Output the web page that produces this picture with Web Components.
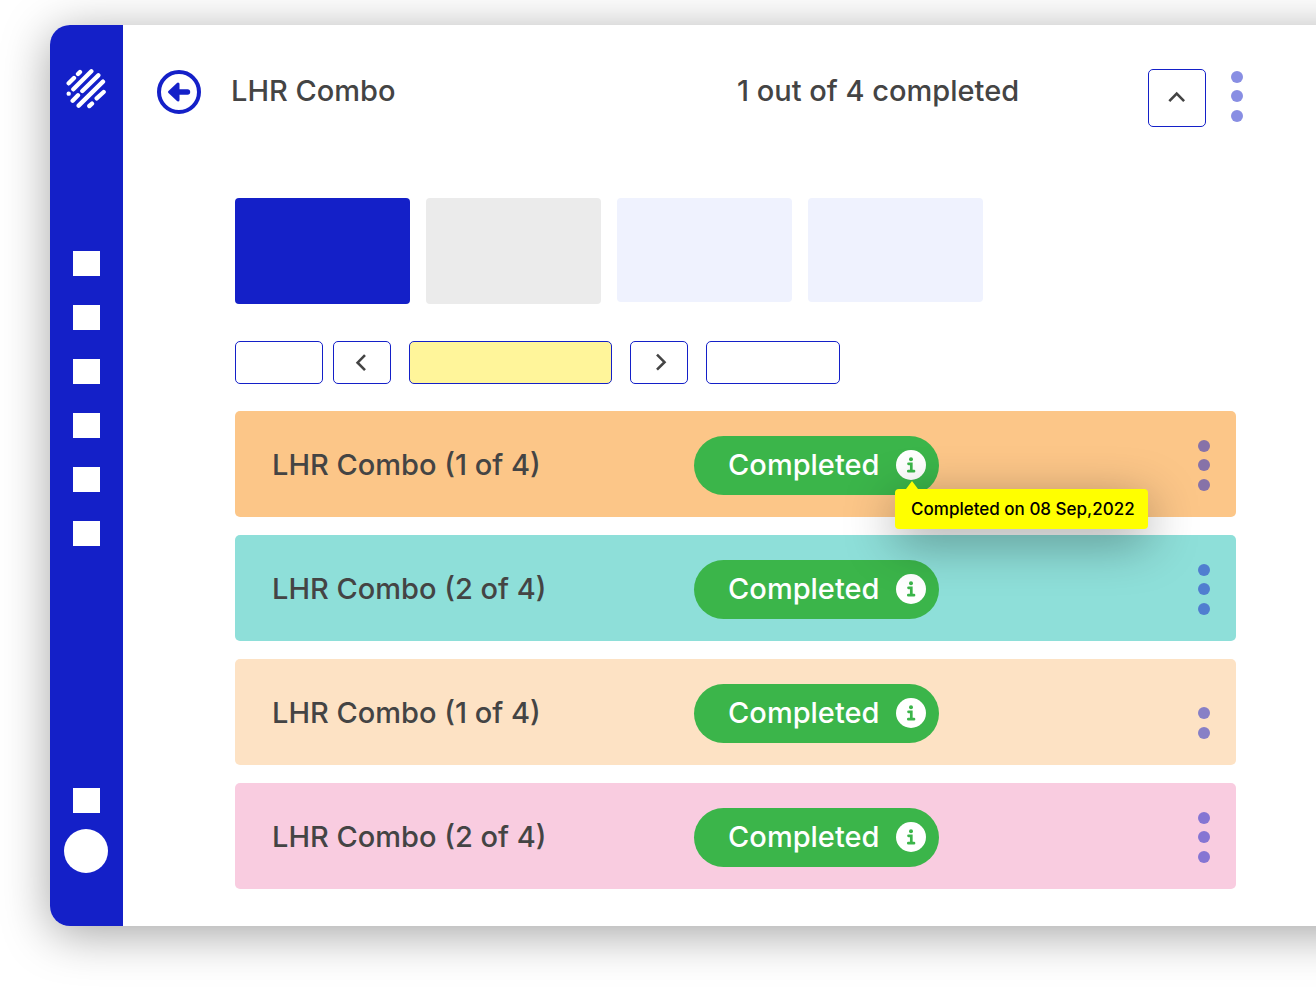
<!DOCTYPE html>
<html lang="en">
<head>
<meta charset="utf-8">
<meta name="viewport" content="width=device-width, initial-scale=1">
<title>LHR Combo</title>
<style>
  body {
    --brand: #1420c8;
    --ink: #444;
    margin: 0;
    background: #fff;
    color: var(--ink);
    font: 500 29px/36px Inter, "Liberation Sans", sans-serif;
  }
</style>
</head>
<body>
<app-shell>
  <side-rail slot="rail"></side-rail>
  <page-header slot="header">
    LHR Combo
    <span slot="status">1 out of 4 completed</span>
  </page-header>
  <card-strip></card-strip>
  <pager-bar></pager-bar>
  <combo-list>
    <combo-row tone="orange" note="Completed on 08 Sep,2022">LHR Combo (1 of 4)</combo-row>
    <combo-row tone="teal">LHR Combo (2 of 4)</combo-row>
    <combo-row tone="peach" dots="2">LHR Combo (1 of 4)</combo-row>
    <combo-row tone="pink">LHR Combo (2 of 4)</combo-row>
  </combo-list>
</app-shell>

<script>
/**
 * @function define
 * @param {string} name
 * @param {string} html
 * @param {Function} setup
 * @returns {void}
 */
const define = (name, html, setup) => {
  const template = document.createElement('template');
  template.innerHTML = html;
  customElements.define(name, class extends HTMLElement {
    constructor () {
      super();
      this._shadowRoot = this.attachShadow({mode: 'open'});
      this._shadowRoot.appendChild(template.content.cloneNode(true));
    }
    connectedCallback () {
      if (setup) setup(this, this._shadowRoot);
    }
  });
};

// the backdrop is wider than the window, so its shadow has no corner at the right
define('app-shell', `
  <style>
  :host {
    display: grid;
    grid-template-columns: 73px 1fr;
    position: relative;
    isolation: isolate;
    overflow: hidden;
    padding: 25px 0 70px 50px;
  }
  :host::before {
    content: "";
    position: absolute;
    z-index: -1;
    inset: 25px -80px 70px 50px;
    border-radius: 20px 0 0 20px;
    background: #fff;
    box-shadow: 0 8px 48px rgba(0,0,0,0.36);
  }
  main {
    min-width: 0;
    padding: 44px 0 37px 34px;
  }
  .body {
    display: flex;
    flex-direction: column;
    margin-top: 71px;
    padding: 0 80px 0 78px;
  }
  </style>
  <slot name="rail"></slot>
  <main>
    <slot name="header"></slot>
    <div class="body"><slot></slot></div>
  </main>
`);

define('side-rail', `
  <style>
  :host {
    display: flex;
    flex-direction: column;
    align-items: center;
    padding: 44px 1px 53px 0;
    box-sizing: border-box;
    border-radius: 20px 0 0 20px;
    background: var(--brand);
  }
  svg {
    display: block;
    width: 40px;
    height: 40px;
  }
  nav {
    display: flex;
    flex-direction: column;
    gap: 29px;
    margin: 142px 0 auto;
  }
  .item {
    display: block;
    width: 27px;
    height: 25px;
    background: #fff;
  }
  .avatar {
    width: 44px;
    height: 44px;
    margin-top: 16px;
    padding: 0;
    border: 0;
    border-radius: 50%;
    background: #fff;
  }
  </style>
  <a href="#home" aria-label="Home">
    <svg viewBox="18 16 120 120" fill="none" stroke="#fff" stroke-width="13" stroke-linecap="round">
      <path d="M54 31L60 25M26 59L42 43M40 77L94 23M67 82L115 35M26 90L26.1 90M38 111L54 95M56 126L129 54M110 104L131 85M88 127L96 120"/>
    </svg>
  </a>
  <nav>
    <a class="item" href="#orders" aria-label="Orders"></a>
    <a class="item" href="#sessions" aria-label="Sessions"></a>
    <a class="item" href="#clients" aria-label="Clients"></a>
    <a class="item" href="#calendar" aria-label="Calendar"></a>
    <a class="item" href="#reports" aria-label="Reports"></a>
    <a class="item" href="#billing" aria-label="Billing"></a>
  </nav>
  <a class="item" href="#settings" aria-label="Settings"></a>
  <button class="avatar" type="button" aria-label="Account"></button>
`);

define('dot-menu', `
  <style>
  :host {
    display: block;
  }
  button {
    display: block;
    padding: 0;
    border: 0;
    background: none;
    cursor: pointer;
  }
  svg {
    display: block;
    width: 12px;
    height: 51px;
    fill: var(--brand);
    opacity: 0.5;
  }
  :host([dots="2"]) circle:first-child {
    visibility: hidden;
  }
  </style>
  <button type="button" aria-label="More actions">
    <svg viewBox="0 0 12 51"><circle cx="6" cy="6" r="6"/><circle cx="6" cy="25" r="6"/><circle cx="6" cy="45" r="6"/></svg>
  </button>
`);

define('outline-button', `
  <style>
  :host {
    display: block;
    height: 43px;
  }
  button {
    display: flex;
    align-items: center;
    justify-content: center;
    width: 100%;
    height: 100%;
    padding: 0;
    border: 1px solid var(--brand);
    border-radius: 5px;
    background: var(--fill, #fff);
    cursor: pointer;
  }
  svg {
    display: none;
    width: 20px;
    height: 20px;
    fill: none;
    stroke: var(--ink);
    stroke-width: 2.6;
  }
  :host([icon]) svg {
    display: block;
  }
  </style>
  <button type="button"><svg viewBox="0 0 20 20"><path/></svg></button>
`, (host, root) => {
  const paths = {
    up: 'M2.3 13.2L9.7 5.7L17.1 13.2',
    left: 'M13 2.2L5.6 9.7L13 17.2',
    right: 'M8 1.7L15.5 9.2L8 16.7'
  };
  root.querySelector('button').setAttribute('aria-label', host.getAttribute('label'));
  if (host.hasAttribute('icon')) {
    root.querySelector('path').setAttribute('d', paths[host.getAttribute('icon')]);
  }
});

define('page-header', `
  <style>
  :host {
    display: grid;
    grid-template-columns: 44px 1fr;
    column-gap: 30px;
    padding-right: 73px;
  }
  .back {
    width: 44px;
    height: 44px;
    margin-top: 1px;
    padding: 0;
    border: 0;
    background: none;
    cursor: pointer;
  }
  .back svg {
    display: block;
  }
  .bar {
    display: grid;
    grid-template-columns: 50% 1fr auto;
  }
  h1, p {
    margin: 4px 0 0;
    font: inherit;
  }
  .actions {
    display: flex;
    gap: 25px;
  }
  outline-button {
    width: 58px;
    height: 58px;
  }
  dot-menu {
    margin-top: 2px;
  }
  </style>
  <button class="back" type="button" aria-label="Back">
    <svg width="44" height="44" viewBox="0 0 44 44">
      <circle cx="22" cy="22" r="20" fill="none" stroke="#1420c8" stroke-width="4"/>
      <path d="M12.5 22L21 14V30Z" fill="#1420c8" stroke="#1420c8" stroke-width="3" stroke-linejoin="round"/>
      <path d="M20 22H30.5" stroke="#1420c8" stroke-width="5.4" stroke-linecap="round"/>
    </svg>
  </button>
  <div class="bar">
    <h1><slot></slot></h1>
    <p><slot name="status"></slot></p>
    <div class="actions">
      <outline-button icon="up" label="Collapse"></outline-button>
      <dot-menu></dot-menu>
    </div>
  </div>
`);

define('card-strip', `
  <style>
  :host {
    display: flex;
    gap: 16px;
  }
  button {
    flex: 0 1 175px;
    height: 106px;
    padding: 0;
    border: 0;
    border-radius: 4px;
    background: #eff2fe;
  }
  .active {
    background: var(--brand);
  }
  .muted {
    background: #ebebeb;
  }
  .short {
    height: 104px;
  }
  </style>
  <button class="active" type="button" aria-label="Card 1"></button>
  <button class="muted" type="button" aria-label="Card 2"></button>
  <button class="short" type="button" aria-label="Card 3"></button>
  <button class="short" type="button" aria-label="Card 4"></button>
`);

define('pager-bar', `
  <style>
  :host {
    display: flex;
    gap: 18px;
    margin: 37px 0 27px;
  }
  .group {
    display: flex;
    gap: 10px;
  }
  .today {
    width: 88px;
  }
  .step {
    width: 58px;
  }
  .date {
    width: 203px;
    --fill: #fff59a;
  }
  .view {
    width: 134px;
  }
  </style>
  <div class="group">
    <outline-button class="today" label="Today"></outline-button>
    <outline-button class="step" icon="left" label="Previous"></outline-button>
  </div>
  <outline-button class="date" label="Date"></outline-button>
  <outline-button class="step" icon="right" label="Next"></outline-button>
  <outline-button class="view" label="View"></outline-button>
`);

define('status-pill', `
  <style>
  :host {
    display: flex;
    align-items: center;
    justify-content: space-between;
    width: 245px;
    height: 59px;
    padding: 0 13px 0 34px;
    box-sizing: border-box;
    border-radius: 30px;
    background: #3bb54a;
    color: #fff;
  }
  .info {
    position: relative;
    width: 30px;
    height: 30px;
  }
  button {
    display: block;
    padding: 0;
    border: 0;
    background: none;
    cursor: pointer;
  }
  svg {
    display: block;
    width: 30px;
    height: 30px;
  }
  .tip {
    position: absolute;
    z-index: 1;
    top: 39px;
    left: -1px;
    padding: 8px 13px 8px 16px;
    border-radius: 4px;
    background: #ff0;
    box-shadow: 0 12px 50px rgba(0,0,0,0.38);
    color: #000;
    font-size: 17px;
    line-height: 24px;
    white-space: nowrap;
  }
  .tip::before {
    content: "";
    position: absolute;
    bottom: 100%;
    left: 11px;
    border: 6px solid transparent;
    border-top: 0;
    border-bottom: 8px solid #ff0;
  }
  .tip[hidden] {
    display: none;
  }
  </style>
  <slot></slot>
  <div class="info">
    <button type="button" aria-label="Details" aria-describedby="tip">
      <svg viewBox="0 0 30 30">
        <circle cx="15" cy="15" r="15" fill="#fff"/>
        <circle cx="15" cy="9.3" r="2" fill="#3bb54a"/>
        <path d="M12.5 13.8H15.3V21M12.3 21.2H18" fill="none" stroke="#3bb54a" stroke-width="2.7" stroke-linecap="round"/>
      </svg>
    </button>
    <div class="tip" id="tip" role="tooltip" hidden></div>
  </div>
`, (host, root) => {
  const note = host.getAttribute('note');
  if (!note) return;
  const tip = root.querySelector('.tip');
  tip.textContent = note;
  tip.hidden = false;
});

define('combo-list', `
  <style>
  :host {
    display: flex;
    flex-direction: column;
    gap: 18px;
  }
  </style>
  <slot></slot>
`, (host) => host.setAttribute('role', 'list'));

define('combo-row', `
  <style>
  :host {
    display: grid;
    grid-template-columns: 45% 1fr auto;
    align-items: center;
    min-height: 106px;
    padding: 2px 26px 0 37px;
    box-sizing: border-box;
    border-radius: 5px;
    background: #fcc688;
  }
  :host([tone="teal"]) {
    background: #8edfd9;
  }
  :host([tone="peach"]) {
    background: #fde2c4;
  }
  :host([tone="pink"]) {
    background: #f9cce0;
  }
  h2 {
    margin: 0;
    font: inherit;
  }
  </style>
  <h2><slot></slot></h2>
  <div class="status"></div>
  <dot-menu></dot-menu>
`, (host, root) => {
  host.setAttribute('role', 'listitem');
  const pill = document.createElement('status-pill');
  pill.textContent = 'Completed';
  if (host.hasAttribute('note')) {
    pill.setAttribute('note', host.getAttribute('note'));
  }
  root.querySelector('.status').replaceChildren(pill);
  if (host.hasAttribute('dots')) {
    root.querySelector('dot-menu').setAttribute('dots', host.getAttribute('dots'));
  }
});
</script>
</body>
</html>
